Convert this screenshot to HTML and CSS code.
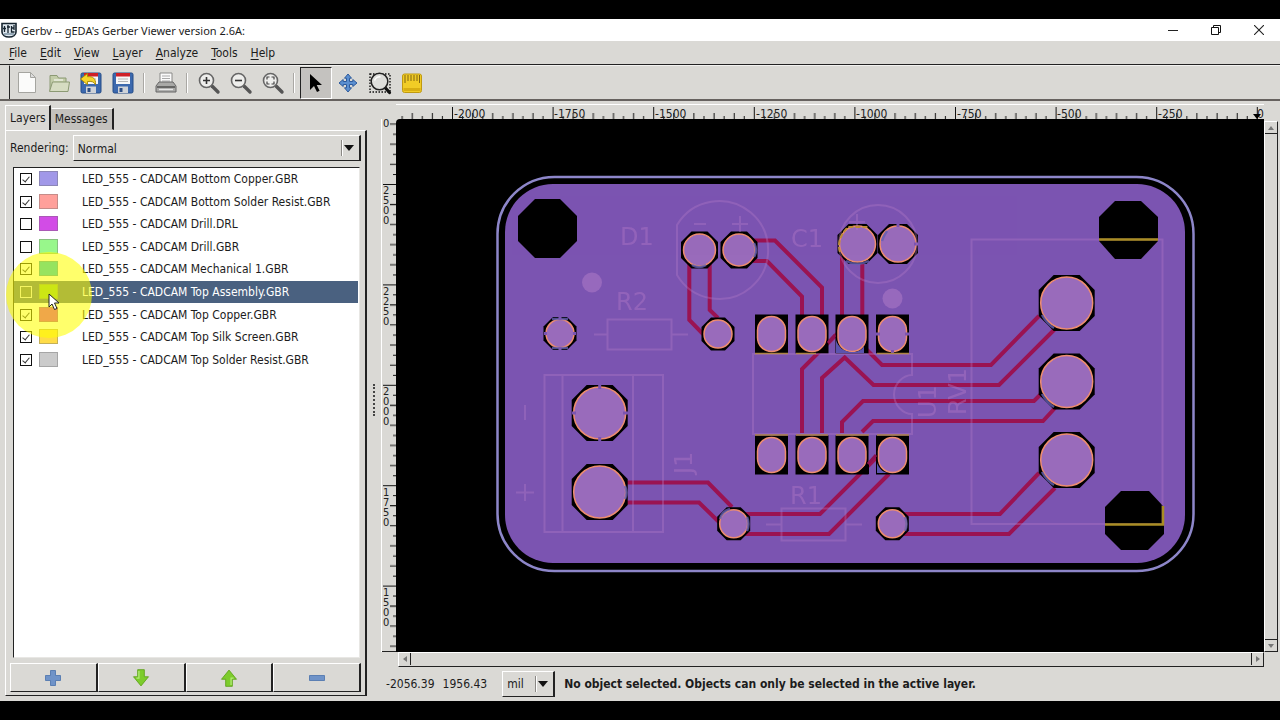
FILE: index.html
```html
<!DOCTYPE html>
<html lang="en">
<head>
<meta charset="utf-8">
<title>Gerbv -- gEDA's Gerber Viewer version 2.6A:</title>
<link rel="stylesheet" href="styles.css">
</head>
<body>
<svg class="defs" aria-hidden="true">
  <defs>
    <symbol id="lens" viewBox="0 0 24 24">
      <path d="M15 15l6 6" stroke="#555" stroke-width="3.4" stroke-linecap="round"/>
      <circle cx="9.500" cy="9.500" r="7" fill="#eeeeec" stroke="#666" stroke-width="1.6"/>
    </symbol>
    <symbol id="floppy" viewBox="0 0 24 24">
      <rect x="2" y="2" width="20" height="20" rx="1.500" fill="#3c69ae" stroke="#244c87"/>
      <path d="M5 2h14v11H5z" fill="#f7f7f7"/><path d="M5 2h14v3.500H5z" fill="#cf1f26"/>
      <path d="M7 8h10M7 10.500h10" stroke="#b5b5b5"/>
      <path d="M7 15.500h10V22H7z" fill="#cfd3d8"/><path d="M8.500 17h3v4h-3z" fill="#2e4f86"/>
    </symbol>
    <symbol id="arrow" viewBox="0 0 24 24">
      <path d="M8 2h8v8.500h5L12 21.500 3 10.500h5z" fill="#7dcc2c" stroke="#5aa016" stroke-linejoin="round"/>
      <path d="M9.500 3.500v8.500H6.500" fill="none" stroke="#b4ec78" stroke-width="1.500"/>
    </symbol>
    <polygon id="oct28" points="-13,-28 13,-28 28,-13 28,13 13,28 -13,28 -28,13 -28,-13"/>
    <polygon id="oct20" points="-9,-20 9,-20 20,-9 20,9 9,20 -9,20 -20,9 -20,-9"/>
    <polygon id="oct18" points="-8,-18.500 8,-18.500 18.500,-8 18.500,8 8,18.500 -8,18.500 -18.500,8 -18.500,-8"/>
    <polygon id="oct16" points="-7,-16.500 7,-16.500 16.500,-7 16.500,7 7,16.500 -7,16.500 -16.500,7 -16.500,-7"/>
    <g id="padBig"><use href="#oct28"/><circle r="26" class="pad"/></g>
    <g id="padC"><use href="#oct20"/><circle r="18" class="pad"/></g>
    <g id="padMid"><use href="#oct18"/><circle r="16" class="pad"/></g>
    <g id="padSmall"><use href="#oct16"/><circle r="14" class="pad"/></g>
    <g id="padDip"><rect x="-16.500" y="-19.500" width="33" height="39"/><rect x="-14" y="-17.500" width="28" height="35" rx="14" class="pad"/></g>
  </defs>
</svg>
<div class="window">
  <header class="titlebar">
    <svg class="app-icon" viewBox="0 0 16 16"><path d="M1 1.500h14v8.500c0 3-3 5-7 5s-7-2-7-5z" fill="#dfe8ef" stroke="#16242f" stroke-width="1.600"/><path d="M3.500 4v6M2 6.500h3M7 3v8M6 5h3M10.500 4v6h3M13 3v5M10.500 6h3" stroke="#16242f" stroke-width="1.300" fill="none"/><path d="M3 12h10" stroke="#4c6a80"/></svg>
    <span class="title">Gerbv -- gEDA's Gerber Viewer version 2.6A:</span>
    <div class="win-buttons">
      <button aria-label="Minimize"><svg viewBox="0 0 10 10"><path d="M0 5.500h10" stroke="#222"/></svg></button>
      <button aria-label="Restore"><svg viewBox="0 0 10 10"><path d="M.5 2.500h7v7h-7zM2.500 2.500v-2h7v7h-2" fill="none" stroke="#111"/></svg></button>
      <button aria-label="Close"><svg viewBox="0 0 10 10"><path d="M0 0l10 10M10 0L0 10" stroke="#222" stroke-width="1.100"/></svg></button>
    </div>
  </header>
  <nav class="menubar">
    <button><u>F</u>ile</button><button><u>E</u>dit</button><button><u>V</u>iew</button><button><u>L</u>ayer</button><button><u>A</u>nalyze</button><button><u>T</u>ools</button><button><u>H</u>elp</button>
  </nav>
  <div class="toolbar">
    <button aria-label="New"><svg viewBox="0 0 24 24"><path d="M3.500 1.500h12l5 5v15h-17z" fill="#fbfbfa" stroke="#a5a5a0"/><path d="M15.500 1.500v5h5z" fill="#ddd" stroke="#a5a5a0"/></svg></button>
    <button aria-label="Open"><svg viewBox="0 0 24 24"><path d="M3 20V4.500h7l1.500 2.500H19v13z" fill="#c3cda9" stroke="#8c9a74"/><path d="M2.500 20.500L5.500 11h17l-1.500 9.500z" fill="#d6dcc2" stroke="#8c9a74"/><path d="M7 9h9" stroke="#fff"/></svg></button>
    <button aria-label="Revert"><svg viewBox="0 0 24 24"><use href="#floppy"/><path d="M1.500 8l7-5.500v3.200c5.500-.5 8.500 2 8 8-1.500-3-4-3.700-8-3.200v3.200z" fill="#f5d52c" stroke="#a98800" stroke-width=".9"/></svg></button>
    <button aria-label="Save"><svg viewBox="0 0 24 24"><use href="#floppy"/></svg></button>
    <span class="separator"></span>
    <button aria-label="Print"><svg viewBox="0 0 24 24"><path d="M6 12V2h12v10" fill="#fafafa" stroke="#8a8a88"/><path d="M8 5h8M8 7.500h8M8 10h8" stroke="#aaa"/><path d="M5 11h14l3 4v6H2v-6z" fill="#a9a9a7" stroke="#666"/><path d="M3 16h18" stroke="#555" stroke-width="1.600"/><path d="M5 18.500h14" stroke="#e6e6e6" stroke-width="1.300"/></svg></button>
    <span class="separator"></span>
    <button aria-label="Zoom in"><svg viewBox="0 0 24 24"><use href="#lens"/><path d="M9.500 6v7M6 9.500h7" stroke="#333" stroke-width="1.600"/></svg></button>
    <button aria-label="Zoom out"><svg viewBox="0 0 24 24"><use href="#lens"/><path d="M6 9.500h7" stroke="#333" stroke-width="1.600"/></svg></button>
    <button aria-label="Zoom to fit"><svg viewBox="0 0 24 24"><use href="#lens"/><path d="M6 8.500V6h2.500M10.500 6H13v2.500M13 10.500V13h-2.500M8.500 13H6v-2.500" fill="none" stroke="#444" stroke-width="1.200"/></svg></button>
    <span class="separator"></span>
    <button class="pressed" aria-label="Pointer" aria-pressed="true"><svg viewBox="0 0 24 24"><path d="M6 3v16l4-4 3 6 2.600-1.200L12.700 14H18z" fill="#000"/></svg></button>
    <button aria-label="Move"><svg viewBox="0 0 24 24"><path d="M12 3l3.500 4.200h-2v3.300h3.300v-2L21 12l-4.200 3.500v-2h-3.300v3.300h2L12 21l-3.500-4.200h2v-3.300H7.200v2L3 12l4.200-3.500v2h3.300V7.200h-2z" fill="#5b8fd0" stroke="#2c5a9c"/></svg></button>
    <button aria-label="Zoom area"><svg viewBox="0 0 24 24"><path d="M2 3h20v18H2z" fill="none" stroke="#111" stroke-width="1.400" stroke-dasharray="1.500 1.500"/><path d="M16.500 16l5 5.500" stroke="#111" stroke-width="3.200" stroke-linecap="round"/><circle cx="11.500" cy="10.500" r="8.300" fill="#dededb" stroke="#222" stroke-width="1.500"/><path d="M6.500 9.500c1-3 4-4 6-3.500" stroke="#fff" stroke-width="1.500" fill="none"/></svg></button>
    <button aria-label="Measure"><svg viewBox="0 0 24 24"><rect x="2.500" y="3" width="19" height="18.500" rx="2" fill="#f1cc26" stroke="#c09a10"/><path d="M5 4v8M8 4v6M11 4v6M14 4v6M17 4v6M19.500 4v8" stroke="#806510"/><path d="M3.500 18.500h17" stroke="#d8ae12" stroke-width="3"/></svg></button>
  </div>
  <main class="workspace">
    <aside class="sidebar">
      <div class="tabs" role="tablist"><button class="tab active" role="tab" aria-selected="true">Layers</button><button class="tab" role="tab" aria-selected="false">Messages</button></div>
      <section class="page">
        <div class="rendering"><label for="rendering">Rendering:</label><span class="combo"><select id="rendering"><option>Normal</option></select></span></div>
        <div class="layer-box">
          <ul class="layers">
            <li><input type="checkbox" id="l1" checked><i class="swatch lavender"></i><label for="l1">LED_555 - CADCAM Bottom Copper.GBR</label></li>
            <li><input type="checkbox" id="l2" checked><i class="swatch pink"></i><label for="l2">LED_555 - CADCAM Bottom Solder Resist.GBR</label></li>
            <li><input type="checkbox" id="l3"><i class="swatch magenta"></i><label for="l3">LED_555 - CADCAM Drill.DRL</label></li>
            <li><input type="checkbox" id="l4"><i class="swatch green"></i><label for="l4">LED_555 - CADCAM Drill.GBR</label></li>
            <li><input type="checkbox" id="l5" checked><i class="swatch mint"></i><label for="l5">LED_555 - CADCAM Mechanical 1.GBR</label></li>
            <li class="selected"><input type="checkbox" id="l6"><i class="swatch lime"></i><label for="l6">LED_555 - CADCAM Top Assembly.GBR</label></li>
            <li><input type="checkbox" id="l7" checked><i class="swatch orange"></i><label for="l7">LED_555 - CADCAM Top Copper.GBR</label></li>
            <li><input type="checkbox" id="l8" checked><i class="swatch yellow"></i><label for="l8">LED_555 - CADCAM Top Silk Screen.GBR</label></li>
            <li><input type="checkbox" id="l9" checked><i class="swatch grey"></i><label for="l9">LED_555 - CADCAM Top Solder Resist.GBR</label></li>
          </ul>
          <div class="spotlight"><svg viewBox="0 0 12 18"><path d="M1 1v13l3-3 2.500 5.500 2.500-1L6.500 10H11z" fill="#fff" stroke="#222"/></svg></div>
        </div>
        <div class="layer-actions">
          <button aria-label="Add layer"><svg viewBox="0 0 24 24"><path d="M9 3h6v6h6v6h-6v6H9v-6H3V9h6z" fill="#6f93c8" stroke="#4c74ad"/></svg></button>
          <button aria-label="Move down"><svg viewBox="0 0 24 24"><use href="#arrow"/></svg></button>
          <button aria-label="Move up"><svg viewBox="0 0 24 24"><use href="#arrow" transform="rotate(180 12 12)"/></svg></button>
          <button aria-label="Remove layer"><svg viewBox="0 0 24 24"><path d="M3 9h18v6H3z" fill="#6f93c8" stroke="#4c74ad"/></svg></button>
        </div>
      </section>
    </aside>
    <div class="splitter"></div>
    <section class="viewer">
      <svg class="ruler-top" viewBox="396 104 868 15" preserveAspectRatio="xMinYMax slice">
        <defs><pattern id="ticksX" x="452" y="104" width="100.600" height="15" patternUnits="userSpaceOnUse"><path d="M.5 3v12M20.600 9v6M40.700 9v6M60.900 9v6M81 9v6M10.600 12v3M30.700 12v3M50.800 12v3M70.900 12v3M91 12v3" stroke="#111"/></pattern></defs>
        <rect x="401" y="104" width="857" height="15" fill="url(#ticksX)"/>
        <g class="ruler-text"><text x="454" y="118">-2000</text><text x="554" y="118">-1750</text><text x="655" y="118">-1500</text><text x="756" y="118">-1250</text><text x="856" y="118">-1000</text><text x="957" y="118">-750</text><text x="1057" y="118">-500</text><text x="1158" y="118">-250</text><text x="1257" y="118">0</text></g>
        <path d="M1253 114h8l-4 5z"/>
      </svg>
      <svg class="ruler-left" viewBox="381 119 15 533" preserveAspectRatio="xMaxYMin slice">
        <defs><pattern id="ticksY" x="381" y="184" width="15" height="100.400" patternUnits="userSpaceOnUse"><path d="M2 .5h13M9 20.500h6M9 40.600h6M9 60.700h6M9 80.800h6M12 10.500h3M12 30.600h3M12 50.700h3M12 70.800h3M12 90.900h3" stroke="#111"/></pattern></defs>
        <rect x="381" y="123" width="15" height="529" fill="url(#ticksY)"/>
        <g class="ruler-text small">
          <text x="383" y="127">0</text>
          <text y="194"><tspan x="383">2</tspan><tspan x="383" dy="10">5</tspan><tspan x="383" dy="10">0</tspan><tspan x="383" dy="10">0</tspan></text>
          <text y="295"><tspan x="383">2</tspan><tspan x="383" dy="10">2</tspan><tspan x="383" dy="10">5</tspan><tspan x="383" dy="10">0</tspan></text>
          <text y="395"><tspan x="383">2</tspan><tspan x="383" dy="10">0</tspan><tspan x="383" dy="10">0</tspan><tspan x="383" dy="10">0</tspan></text>
          <text y="496"><tspan x="383">1</tspan><tspan x="383" dy="10">7</tspan><tspan x="383" dy="10">5</tspan><tspan x="383" dy="10">0</tspan></text>
          <text y="596"><tspan x="383">1</tspan><tspan x="383" dy="10">5</tspan><tspan x="383" dy="10">0</tspan><tspan x="383" dy="10">0</tspan></text>
        </g>
      </svg>
      <svg class="board" viewBox="396 119 868 533" role="img" aria-label="Circuit board">
        <rect x="497.500" y="177" width="696" height="394" rx="57" fill="none" stroke="#8d86c9" stroke-width="2.500"/>
        <rect x="505" y="184" width="680" height="379" rx="48" fill="#7b54b1"/>
        <g class="trace">
          <path d="M689.300 262V320L704 335M709.700 262V310L718 318M753 240.500H775L822 287.500V318M753 261H767L802 296.500V318M842 255V318M862.300 262V318"/>
          <path d="M802 433V369L838 333M822 433V378L844.700 357.500 873.500 385H999L1055 329M866 349L882 365H991L1039 316M842 433V422L863 401H1034L1041 394M862 432L873 421H1043L1055 408"/>
          <path d="M626 482.500H708L732 507M626 502.500H699L720 523M745 514H820L879 455M745 534H829L889 474M903 514H1000L1039 473M903 534H1009L1055 488"/>
        </g>
        <polygon points="535,199 560,199 577,216 577,241 560,258 535,258 518,241 518,216"/>
        <polygon points="1115,201 1141,201 1158,217 1158,241 1141,259 1115,259 1099,241 1099,217"/>
        <polygon points="1121,491 1149,491 1164,507 1164,534 1148,550 1121,550 1105,534 1105,507"/>
        <use href="#padBig" x="1066.700" y="303"/><use href="#padBig" x="1066.700" y="381.500"/><use href="#padBig" x="1066.700" y="460"/>
        <use href="#padBig" x="599.700" y="413"/><use href="#padBig" x="599.700" y="492"/>
        <use href="#padMid" x="699.500" y="250"/><use href="#padMid" x="739" y="250"/>
        <use href="#padSmall" x="718" y="334"/><use href="#padSmall" x="560" y="333.500"/><use href="#padSmall" x="733.700" y="523.700"/><use href="#padSmall" x="892.300" y="523.700"/>
        <use href="#padC" x="857.500" y="244"/><use href="#padC" x="898" y="244"/>
        <use href="#padDip" x="771.500" y="334"/><use href="#padDip" x="812" y="334"/><use href="#padDip" x="852" y="334"/><use href="#padDip" x="892.500" y="334"/>
        <use href="#padDip" x="771.500" y="455"/><use href="#padDip" x="812" y="455"/><use href="#padDip" x="852" y="455"/><use href="#padDip" x="892.500" y="455"/>
        <path d="M836 353v-13c2 7 8 12 16 12 6 0 10-2 12-6v7zM877 463v10h11c-6-1-9-5-11-10z" fill="#5b53ae"/>
        <path d="M828 342v11h-11zM869 462v12h-13z" fill="#000"/><path d="M828 343l7-8M868 464l8-9" stroke="#8c1050" stroke-width="3"/>
        <g fill="none" stroke="#6260b3" stroke-width="2.500" opacity=".8">
          <path d="M754 243q4 7 0 14M692 265q7 4 14 0M846 261q11 6 23 0M1042 315q5 9 12 13M1042 394q5 9 12 13M1042 472q5 9 12 13M720 519q2-8 10-10M747 517q3 7 0 14M905 517q3 7 0 14M625 486q3 7 0 13M552 319h16M552 348h16M887 231q-4 6-5 10"/>
        </g>
        <path d="M599.700 385v4M599.700 437v4M572 413h4M623 413h5M560 317v3M560 347v3M544 333.500h3M573 333.500h3M892.500 350v4M876 334h4M905 334h4M898 224v3M914 244h4" stroke="#7b54b1" stroke-width="3"/>
        <circle cx="592" cy="282.500" r="10" fill="#9769bd"/><circle cx="892.500" cy="298.500" r="10" fill="#9769bd"/>
        <g class="silk">
          <path d="M677 225A49 49 0 1 1 677 275Z"/><circle cx="878" cy="244" r="39"/>
          <path d="M607.500 319.500h64v30h-64zM594 334.500h13.500M671.500 334.500H688M781.500 508.500h64v32h-64zM766 524.500h15.500M845.500 524.500H862"/>
          <path d="M544.500 375h118.500v157H544.500zM562.500 375v157M633 375v157M971.500 239.500h191v284.500h-191z"/>
          <path d="M912 375v-21H753v80h159v-20c-9 0-18-9-18-19.500s9-19.500 18-19.500z"/>
          <path d="M525 405v15M516 492.500h18M525 484v17M694 224h12M732 224h16M740 216v16M849 222h16M857 214v16"/>
        </g>
        <g class="silk-text">
          <text x="620" y="245">D1</text><text x="791" y="247">C1</text><text x="616" y="310">R2</text><text x="790" y="504">R1</text>
          <text transform="translate(692 474) rotate(-90)">J1</text><text transform="translate(936 418) rotate(-90)">U1</text><text transform="translate(966 415) rotate(-90)">RV1</text>
        </g>
        <path d="M1099 239.500h59M1105 524.500h58V506" fill="none" stroke="#a98d24" stroke-width="2.500"/>
        <path d="M755 353.500h33M796 353.500h20M877 353.500h32M755 435h33M796 435h32M836 435h33M877 435h32" stroke="#ad8445" stroke-width="1.500"/>
        <path d="M840 252c-3-9 1-18 8-25h20" fill="none" stroke="#bd8c36" stroke-width="2" stroke-dasharray="5 2"/>
      </svg>
      <div class="scroll vertical"><button aria-label="Scroll up"><svg viewBox="0 0 8 8"><path d="M1 6l3-4 3 4z"/></svg></button><span></span><button aria-label="Scroll down"><svg viewBox="0 0 8 8"><path d="M1 2l3 4 3-4z"/></svg></button></div>
      <div class="scroll horizontal"><button aria-label="Scroll left"><svg viewBox="0 0 8 8"><path d="M6 1L2 4l4 3z"/></svg></button><span></span><button aria-label="Scroll right"><svg viewBox="0 0 8 8"><path d="M2 1l4 3-4 3z"/></svg></button></div>
      <footer class="status"><span class="coords"><span>-2056.39</span><span>1956.43</span></span><span class="combo unit"><select aria-label="Units"><option>mil</option></select></span><strong>No object selected. Objects can only be selected in the active layer.</strong></footer>
    </section>
  </main>
</div>
</body>
</html>
```

FILE: styles.css
```css
* { box-sizing: border-box; }
body {
  margin: 0;
  padding: 19px 0;
  height: 100vh;
  background: #000;
  color: #1c1c1c;
  font: 12px "DejaVu Sans Condensed", "DejaVu Sans", sans-serif;
}
button, select, input { font: inherit; color: inherit; margin: 0; }
button { padding: 0; border: 0; background: none; }
svg { display: block; }
.defs { position: absolute; width: 0; height: 0; }

.window { display: flex; flex-direction: column; height: 100%; background: #dad9d5; }

.titlebar { display: flex; align-items: center; gap: 4px; height: 22px; padding-left: 1px; background: #fff; font: 11px "Noto Sans", sans-serif; }
.app-icon { width: 16px; height: 16px; }
.title { flex: 1; }
.win-buttons { display: flex; }
.win-buttons button { display: grid; place-items: center; width: 43px; height: 20px; }
.win-buttons svg { width: 10px; height: 10px; }

.menubar { display: flex; gap: 13px; height: 24px; padding: 1px 0 0 9px; border-bottom: 1px solid #222; }
.menubar button { white-space: nowrap; }
.menubar u { text-underline-offset: 2px; }

.toolbar { display: flex; align-items: center; height: 34px; padding-left: 1px; margin-left: 9px; border-left: 1px solid #222; border-top: 1px solid #f2f2f0; }
.toolbar button { display: grid; place-items: center; width: 32px; height: 32px; }
.toolbar svg { width: 24px; height: 24px; }
.toolbar .pressed { background: #c4c2bf; border: 1px solid; border-color: #222 #fff #fff #222; }
.separator { width: 2px; height: 20px; margin: 0 5px 0 4px; border-left: 1px solid #aaa8a4; border-right: 1px solid #fff; }

.workspace { flex: 1; min-height: 0; display: flex; padding: 3px 2px 5px 5px; border-top: 2px solid #66625f; }
.sidebar { display: flex; flex-direction: column; flex: 0 0 29%; max-width: 362px; padding-top: 1px; }
.tabs { display: flex; align-items: flex-end; height: 25px; }
.tab { height: 22px; padding: 0 4px 0 3px; border: 1px solid; border-color: #fff #222 transparent transparent; border-right-width: 2px; background: #c3c1bd; }
.tab.active { height: 25px; background: #dad9d5; border-left-color: #fff; border-bottom: 0; padding: 0 3px 0 4px; }
.page { flex: 1; min-height: 0; display: flex; flex-direction: column; gap: 5px; padding: 4px 4px 3px 4px; border: 1px solid; border-color: #fff #222 #222 #fff; border-right-width: 2px; }
.rendering { display: flex; align-items: center; gap: 4px; }
.combo { position: relative; flex: 1; display: flex; border: 1px solid; border-color: #fff #222 #222 #fff; border-right-width: 2px; }
.combo select { flex: 1; height: 24px; padding: 1px 4px 0; border: 0; background: none; appearance: none; }
.combo::before, .combo::after { content: ""; position: absolute; pointer-events: none; }
.combo::before { right: 16px; top: 4px; bottom: 4px; border-left: 1px solid #8a8884; border-right: 1px solid #fff; }
.combo::after { right: 5px; top: 9px; border: 5px solid transparent; border-top: 6px solid #111; border-bottom: 0; }

.layer-box { position: relative; flex: 1; margin: 1px 1px 0 3px; background: #fff; border: 1px solid; border-color: #222 #e8e7e4 #e8e7e4 #222; }
.layers { display: grid; grid-template-rows: repeat(9, 1fr); height: 203px; margin: 0; padding: 0 1px 0 0; list-style: none; }
.layers li { display: flex; align-items: center; padding-left: 6px; white-space: nowrap; }
.layers .selected { background: #4a6180; color: #fff; }
.layers input { appearance: none; width: 12px; height: 12px; border: 1px solid #111; background: #fff; }
.layers input:checked::after { content: ""; display: block; width: 3px; height: 6px; margin: 1px 0 0 3px; border: solid #333; border-width: 0 1px 1px 0; transform: rotate(40deg); }
.layers .selected input { border-color: #e8e8e8; background: #5b6a74; }
.swatch { width: 19px; height: 15px; margin: 0 24px 1px 7px; border: 1px solid rgba(110, 110, 110, .4); }
.lavender { background: #a198e8; }
.pink { background: #ffa09b; }
.magenta { background: #d24ce6; }
.green { background: #98f78b; }
.mint { background: #05bce2; }
.lime { background: #87c330; }
.orange { background: #db30ab; }
.yellow { background: #ffdc48; }
.grey { background: #cbcbcb; }
.spotlight { position: absolute; left: -8px; top: 84px; width: 86px; height: 86px; border-radius: 50%; background: rgba(255, 255, 0, .58); pointer-events: none; }
.spotlight svg { width: 12px; height: 18px; margin: 41px 0 0 42px; }

.layer-actions { display: grid; grid-template-columns: repeat(4, 1fr); }
.layer-actions button { display: grid; place-items: center; height: 29px; border: 1px solid; border-color: #fff #222 #222 #fff; border-right-width: 2px; }
.layer-actions svg { width: 20px; height: 20px; }

.splitter { width: 14px; display: grid; place-items: center; }
.splitter::after { content: ""; height: 32px; border-left: 2px dotted #444; }

.viewer { flex: 1; min-width: 0; display: grid; grid-template: 15px minmax(0, 1fr) 15px 29px / 15px minmax(0, 1fr) 14px; }
.ruler-top { grid-area: 1 / 2; width: 100%; height: 15px; overflow: visible; box-shadow: inset 0 1px #fff; }
.ruler-left { grid-area: 2 / 1; width: 15px; height: 100%; overflow: visible; box-shadow: inset 1px 0 #fff, inset 0 -1px #222; }
.ruler-text { font-size: 12px; fill: #222; }
.ruler-text.small { font-size: 11px; }
.board { grid-area: 2 / 2; width: 100%; height: 100%; background: #000; border-radius: 4px 0 0 0; }
.pad { fill: #996bbb; stroke: #ee8d70; stroke-width: 1.5px; }
.trace { fill: none; stroke: #9a1352; stroke-width: 4px; }
.silk { fill: none; stroke: #b67cc8; stroke-width: 2px; opacity: .35; }
.silk-text { font: 24px "DejaVu Sans", sans-serif; fill: #b67cc8; opacity: .4; }

.scroll { display: flex; background: #d8d7d3; border: 1px solid; border-color: #fff #222 #222 #fff; }
.scroll span { flex: 1; }
.scroll button { display: grid; place-items: center; width: 12px; height: 12px; }
.scroll svg { width: 8px; height: 8px; fill: #777; }
.vertical { grid-area: 2 / 3; flex-direction: column; margin-top: 2px; }
.vertical button:first-child { border-bottom: 1px solid #222; }
.vertical button:last-child { border-top: 1px solid #222; }
.horizontal { grid-area: 3 / 2; margin-left: 2px; }
.horizontal button:first-child { border-right: 1px solid #222; }
.horizontal button:last-child { border-left: 1px solid #222; }

.status { grid-area: 4 / 1 / 5 / 4; display: flex; align-items: center; padding: 4px 0 0 5px; white-space: nowrap; }
.coords { display: flex; gap: 8px; }
.unit { flex: none; width: 53px; margin: 0 9px 0 15px; }
```
